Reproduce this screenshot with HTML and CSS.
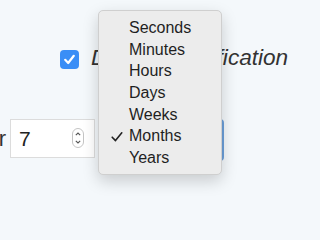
FILE: index.html
```html
<!DOCTYPE html>
<html>
<head>
<meta charset="utf-8">
<link rel="stylesheet" href="styles.css">
</head>
<body>
<div class="page">
  <div class="row-notify">
    <span class="checkbox">
      <svg width="19" height="19" viewBox="0 0 19 19"><path d="M5.2 9.8 L8.2 13 L13.8 5.8" fill="none" stroke="#fff" stroke-width="2.2" stroke-linecap="round" stroke-linejoin="round"/></svg>
    </span>
    <span class="notify-label">Desktop notification</span>
  </div>
  <div class="row-interval">
    <span class="interval-label">Remind me after</span>
    <div class="number-input">
      <span class="number-value">7</span>
      <svg class="spinner" width="12" height="20" viewBox="0 0 12 20"><rect x="0.5" y="0.5" width="11" height="19" rx="5.5" fill="#fff" stroke="#c4c4c4"/><path d="M3.8 7.2 L6 5 L8.2 7.2" fill="none" stroke="#555" stroke-width="1.1"/><path d="M3.8 12.8 L6 15 L8.2 12.8" fill="none" stroke="#555" stroke-width="1.1"/></svg>
    </div>
    <div class="unit-select"></div>
  </div>
  <ul class="menu">
    <li class="menu-item"><span class="check"></span>Seconds</li>
    <li class="menu-item"><span class="check"></span>Minutes</li>
    <li class="menu-item"><span class="check"></span>Hours</li>
    <li class="menu-item"><span class="check"></span>Days</li>
    <li class="menu-item"><span class="check"></span>Weeks</li>
    <li class="menu-item"><span class="check"><svg width="31" height="22" viewBox="0 0 31 22"><path d="M13.2 12.2 L16.5 15.6 L22.8 7.8" fill="none" stroke="#222" stroke-width="1.6" stroke-linecap="round" stroke-linejoin="round"/></svg></span>Months</li>
    <li class="menu-item"><span class="check"></span>Years</li>
  </ul>
</div>
</body>
</html>
```
FILE: styles.css
```css
html, body {
  margin: 0;
  padding: 0;
  background: #f4f8fb;
  overflow: hidden;
}
.page {
  position: relative;
  width: 300px;
  height: 225px;
  font-family: "Liberation Sans", Arial, sans-serif;
  color: #2a2a2a;
}
.row-notify {
  display: flex;
  align-items: flex-start;
  padding: 45px 0 0 60px;
  height: 26px;
}
.checkbox {
  width: 19px;
  height: 19px;
  margin-top: 5px;
  border-radius: 4px;
  background: #3a8ef6;
  display: block;
  flex: none;
}
.checkbox svg { display: block; }
.notify-label {
  margin-left: 12px;
  font-size: 22.6px;
  line-height: 26px;
  font-style: italic;
  color: #333;
  white-space: nowrap;
}
.row-interval {
  display: flex;
  align-items: flex-start;
  margin-top: 48px;
}
.interval-label {
  flex: none;
  width: 200px;
  margin-left: -194px;
  text-align: right;
  font-size: 22px;
  line-height: 39px;
  color: #333;
  white-space: nowrap;
}
.number-input {
  flex: none;
  box-sizing: border-box;
  width: 85px;
  height: 39px;
  margin-left: 4px;
  border: 1px solid #dcdcdc;
  background: #fff;
  display: flex;
  align-items: flex-start;
  padding-left: 8px;
}
.number-value {
  flex: 1;
  font-size: 21px;
  line-height: 37px;
  color: #222;
}
.spinner {
  display: block;
  margin: 8px 10px 0 0;
}
.unit-select {
  flex: none;
  box-sizing: border-box;
  width: 121px;
  height: 42px;
  margin-left: 8px;
  border: 2px solid #6b9fd9;
  border-radius: 4px;
  background: #fff;
}
.menu {
  position: absolute;
  left: 98px;
  top: 10px;
  width: 124px;
  box-sizing: border-box;
  margin: 0;
  padding: 6px 0 5px;
  list-style: none;
  background: #ececec;
  border: 1px solid #cfcfcf;
  border-radius: 5px;
  box-shadow: 0 6px 16px rgba(0, 0, 0, 0.18);
}
.menu-item {
  display: flex;
  align-items: flex-start;
  height: 21.67px;
  font-size: 16px;
  line-height: 21.67px;
  color: #1f1f1f;
  white-space: nowrap;
}
.check {
  flex: none;
  width: 30px;
  height: 21.67px;
}
.check svg { display: block; }
```
